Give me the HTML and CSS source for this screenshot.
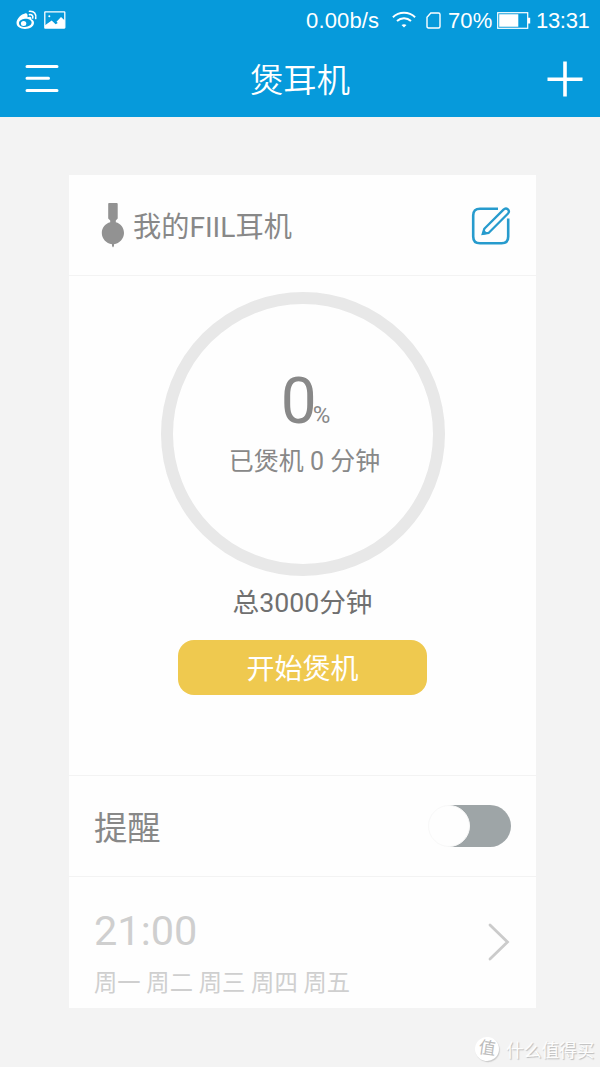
FILE: index.html
```html
<!DOCTYPE html>
<html lang="zh-CN">
<head>
<meta charset="utf-8">
<title>煲耳机</title>
<link rel="stylesheet" href="styles.css">
</head>
<body>
<header class="top">
  <div class="status">
    <svg class="weibo" width="22" height="20" viewBox="0 0 22 20">
      <path fill="#fff" fill-rule="evenodd" d="M9 3.400C5.500 4 .5 8.500 .5 12.800C.5 16.800 4.500 19 9 19C14 19 18 16.500 18 12.800C18 10.900 16.700 9.800 15.300 9.300C16 7 14.500 6 11.500 7.200C11.800 5 11.500 3 9 3.400ZM9 8.800C12.700 8.500 15.600 10.200 15.600 12.600C15.600 15 12.700 16.900 9 17C5.500 17.100 3 15.500 3 13.200C3 10.900 5.600 9 9 8.800Z"/>
      <ellipse cx="7.600" cy="13.500" rx="2.700" ry="2.500" fill="#fff"/>
      <path fill="none" stroke="#fff" stroke-width="1.600" stroke-linecap="round" d="M13.500 4.600C15.800 4.300 17.300 5.700 16.700 8M13.500 1.300C18 .8 20.700 4 19.700 8.500"/>
    </svg>
    <svg class="photo" width="22" height="18" viewBox="0 0 22 18">
      <rect x=".8" y=".8" width="20" height="16.300" rx=".5" fill="none" stroke="#fff" stroke-width="1.300"/>
      <circle cx="5.300" cy="5.300" r="1" fill="#fff"/>
      <path fill="#fff" d="M1 14.300L7.700 9.500L11.600 13.300L13.800 12L12.500 10.800L17 6L20.800 9.500V17H1Z"/>
    </svg>
    <span class="rate">0.00b/s</span>
    <svg class="wifi" width="24" height="18" viewBox="0 0 24 18">
      <g fill="none" stroke="#fff" stroke-width="1.900"><path d="M.9 6.200C7 .3 17 .3 23.100 6.200M5 10C9 6.300 15 6.300 19 10"/></g>
      <path fill="#fff" d="M9.500 14Q12 12.300 14.500 14L12 16.500Z"/>
    </svg>
    <svg class="sim" width="15" height="17" viewBox="0 0 15 17"><path fill="none" stroke="#fff" stroke-width="1.400" d="M4.800 1H12.500Q14 1 14 2.500V14.500Q14 16 12.500 16H2.500Q1 16 1 14.500V5.200Z"/></svg>
    <span class="percent">70%</span>
    <svg class="battery" width="34" height="17" viewBox="0 0 34 17"><rect x=".7" y=".7" width="30" height="15.600" fill="none" stroke="#fff" stroke-width="1.200"/><path fill="#fff" d="M2.200 2.200H21.300V14.800H2.200ZM31 5.800H33.200V11.500H31Z"/></svg>
    <span class="clock">13:31</span>
  </div>
  <div class="bar">
    <svg width="34" height="30" viewBox="0 0 34 30"><path stroke="#fff" stroke-width="3" stroke-linecap="round" d="M2 2.500H32M2 14.300H23.500M2 26.600H32"/></svg>
    <h1 class="title">煲耳机</h1>
    <svg width="36" height="36" viewBox="0 0 36 36"><path stroke="#fff" stroke-width="3.600" d="M.5 18.200H35.500M18 .5V35.500"/></svg>
  </div>
</header>
<main class="card">
  <section class="device">
    <svg class="earphone" width="24" height="46" viewBox="0 0 24 46"><path fill="#929292" d="M8 1H15.700Q16.700 1 16.700 2V16.500L14.800 18.500V20.200C19.500 21.500 23 25.500 23 31C23 36.500 18.500 41.500 13 42.300V44L12 45.500L11 44V42.300C5.200 41.500 .8 36.500 .8 31C.8 25.500 4.500 21.500 9.200 20.200V18.500L7.200 16.500V2Q7.200 1 8 1Z"/></svg>
    <span class="name">我的FIIL耳机</span>
    <svg class="edit" width="40" height="40" viewBox="0 0 40 40">
      <g fill="none" stroke="#279bcd" stroke-width="2.600">
        <path d="M27 2.700H9Q2.200 2.700 2.200 9.500V30.500Q2.200 37.300 9 37.300H30.500Q37.200 37.300 37.200 30.500V12.500"/>
        <path d="M11.800 27.800L13.300 22.800L32.500 3.600Q34.700 1.400 36.900 3.400Q39 5.600 36.800 7.800L17.600 27Z" stroke-width="2.300"/>
      </g>
      <path fill="#279bcd" d="M10.800 29L12.600 23.500L17 27.800Z"/>
    </svg>
  </section>
  <section class="progress">
    <div class="ring">
      <div class="value"><span class="number">0</span><span class="unit">%</span></div>
      <div class="done">已煲机 0 分钟</div>
    </div>
    <div class="total">总3000分钟</div>
    <button class="start">开始煲机</button>
  </section>
  <section class="remind">
    <span class="label">提醒</span>
    <span class="switch"><span class="knob"></span></span>
  </section>
  <section class="schedule">
    <div>
      <div class="time">21:00</div>
      <div class="days">周一 周二 周三 周四 周五</div>
    </div>
    <svg class="arrow" width="22" height="38" viewBox="0 0 22 38"><path fill="none" stroke="#cbcbcb" stroke-width="2.800" stroke-linecap="round" d="M2 2L19.500 19L2 36"/></svg>
  </section>
</main>
<footer class="brand"><span class="badge">值</span><span class="brand-name">什么值得买</span></footer>
</body>
</html>
```
FILE: styles.css
```css
* { box-sizing: border-box; }
body {
  margin: 0;
  height: 1067px;
  overflow: hidden;
  background: #f3f3f3;
  font-family: Roboto, "Noto Sans CJK SC", sans-serif;
  color: #888;
  white-space: nowrap;
}
svg { display: block; flex: none; }
.top { height: 117px; background: #069adb; color: #fff; }
.status {
  display: flex;
  align-items: center;
  height: 40px;
  padding-left: 16px;
  font: 22px/40px "Liberation Sans", sans-serif;
}
.status span { padding-top: 1px; }
.photo { margin-left: 6px; }
.rate { width: 74px; margin-left: 240px; letter-spacing: .15px; }
.wifi { margin-left: 12px; }
.sim { margin-left: 10px; }
.percent { width: 47px; margin-left: 7px; letter-spacing: .1px; }
.battery { margin-left: 2px; }
.clock { margin-left: 5px; letter-spacing: -.3px; }
.bar {
  display: flex;
  align-items: center;
  justify-content: space-between;
  height: 77px;
  padding: 0 17px 0 25px;
}
.title { margin: 0; padding: 4px 6px 0 0; font-size: 33.3px; font-weight: 350; line-height: 73px; }
.card { width: 467px; height: 833px; margin: 58px 0 0 69px; background: #fefefe; }
.device {
  display: flex;
  align-items: center;
  height: 101px;
  padding: 0 25px 0 32px;
  border-bottom: 1px solid #f3f3f3;
}
.edit { margin-top: 2px; }
.name { flex: 1; margin-left: 8px; padding-top: 5px; font-size: 28.2px; line-height: 40px; }
.progress {
  display: flex;
  flex-direction: column;
  align-items: center;
  height: 499px;
  padding-top: 16px;
}
.ring {
  width: 284px;
  height: 284px;
  border: 12px solid #e8e8e8;
  border-radius: 50%;
  padding-top: 59px;
  text-align: center;
}
.value { display: flex; align-items: baseline; justify-content: center; height: 81px; margin-left: 6px; }
.number { font-size: 64px; line-height: 78px; letter-spacing: -4px; }
.unit { font-size: 24px; }
.done { padding-left: 4px; font-size: 25px; line-height: 36px; }
.total { margin-top: 7px; font-size: 26.7px; line-height: 40px; color: #707070; }
.start {
  width: 249px;
  height: 55px;
  margin-top: 17px;
  padding: 4px 0 0;
  border: 0;
  border-radius: 16px;
  background: #efc94f;
  color: #fff;
  font: 28px/51px Roboto, "Noto Sans CJK SC", sans-serif;
}
.remind {
  display: flex;
  align-items: center;
  justify-content: space-between;
  height: 101px;
  padding: 0 25px;
  border-top: 1px solid #f3f3f3;
  font-size: 33.3px;
}
.label { margin-top: -1px; }
.switch { width: 83px; height: 42px; border-radius: 21px; background: linear-gradient(90deg, #fefefe 20px, #9ea5a7 20px); }
.knob { display: block; width: 42px; height: 42px; border: 1px solid #f8f8f8; border-radius: 50%; background: #fefefe; }
.schedule {
  display: flex;
  align-items: center;
  justify-content: space-between;
  height: 132px;
  padding: 0 26px 0 25px;
  border-top: 1px solid #f3f3f3;
  color: #cfcfcf;
}
.time { padding-top: 24px; font-size: 41.5px; line-height: 56px; }
.days { font-size: 23.3px; line-height: 48px; }
.arrow { margin-top: -2px; }
.brand { display: flex; align-items: center; height: 36px; margin-top: 23px; padding-left: 475px; font-size: 17.7px; }
.badge {
  width: 24px;
  height: 24px;
  border-radius: 50%;
  background: #fff;
  box-shadow: 1px 1px 1px #ccc;
  color: #bbb;
  font-size: 17px;
  line-height: 23px;
  text-align: center;
  transform: rotate(8deg);
}
.brand-name { margin-left: 7px; color: #fdfdfd; text-shadow: 1px 1px 1px #bbb; }
```
